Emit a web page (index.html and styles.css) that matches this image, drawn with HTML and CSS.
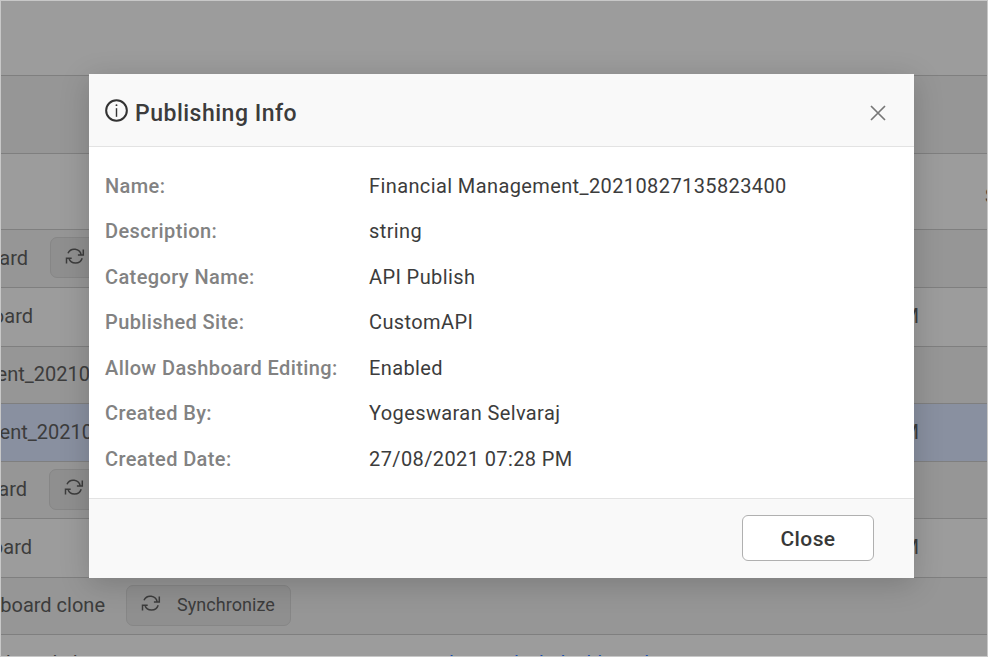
FILE: index.html
```
<!DOCTYPE html>
<html lang="en">
<head>
<meta charset="utf-8">
<title>Publishing Info</title>
<link rel="stylesheet" href="styles.css">
</head>
<body>
<svg class="defs" width="0" height="0">
  <symbol id="sync" viewBox="0 0 20 20">
    <path d="M3 7.3A7 7 0 0 1 16.2 9M18.3 3.6V8.9H12.9M17.2 12.3A7 7 0 0 1 3.9 12.2M1.5 17.5V12.2H6.7"/>
  </symbol>
</svg>
<main class="page">
  <div class="row h75"></div>
  <div class="row h78 alt"></div>
  <div class="row h76"><span class="status">Status</span></div>
  <div class="row h58 alt"><span class="name w27">ard</span><span class="sync first"><svg><use href="#sync"/></svg></span></div>
  <div class="row h59"><span class="name w32">oard</span><span class="time">PM</span></div>
  <div class="row h57 alt"><span class="name w89">ent_20210</span></div>
  <div class="row h58 selected"><span class="name w91">ent_20210</span><span class="time">PM</span></div>
  <div class="row h57 alt"><span class="name w27 shift">ard</span><span class="sync second"><svg><use href="#sync"/></svg></span></div>
  <div class="row h59"><span class="name w32 shift">oard</span><span class="time">PM</span></div>
  <div class="row h57 alt"><span class="name w104">board clone</span><span class="sync"><svg><use href="#sync"/></svg>Synchronize</span></div>
  <div class="row last"><span class="tail">board clone</span><span class="link"><span>l</span><span>l</span><span>k dashboard</span></span></div>
</main>
<section class="modal">
  <header class="head">
    <svg class="info" viewBox="0 0 24 24"><circle cx="12" cy="12" r="10.8"/><path class="stem" d="M12 9.6V18.6"/><circle class="dot" cx="12" cy="6.4" r="1"/></svg>
    <h1>Publishing Info</h1>
    <svg class="x" viewBox="0 0 16 16"><path d="M1 1L15 15M15 1L1 15"/></svg>
  </header>
  <dl class="body">
    <dt>Name:</dt><dd>Financial Management_20210827135823400</dd>
    <dt>Description:</dt><dd>string</dd>
    <dt>Category Name:</dt><dd>API Publish</dd>
    <dt>Published Site:</dt><dd>CustomAPI</dd>
    <dt>Allow Dashboard Editing:</dt><dd>Enabled</dd>
    <dt>Created By:</dt><dd>Yogeswaran Selvaraj</dd>
    <dt>Created Date:</dt><dd>27/08/2021 07:28 PM</dd>
  </dl>
  <footer class="foot"><button>Close</button></footer>
</section>
</body>
</html>
```
FILE: styles.css
```
* { box-sizing: border-box; }
body { margin: 0; font-family: Roboto, sans-serif; font-size: 20px; color: #3c3c3c; overflow: hidden; }
.defs { display: block; position: absolute; }
.page { width: 988px; height: 657px; border: 1px solid #c8c8c8; background: #9c9c9c; overflow: hidden; display: flex; flex-direction: column; }
.row { flex: none; display: flex; align-items: center; padding-bottom: 2px; border-bottom: 1px solid #7f7f7f; overflow: hidden; white-space: nowrap; }
.alt { background: #969696; }
.selected { background: #8990a0; }
.h57 { height: 57px; }
.h58 { height: 58px; }
.h59 { height: 59px; }
.h75 { height: 75px; }
.h76 { height: 76px; }
.h78 { height: 78px; }
.name { flex: none; display: flex; justify-content: flex-end; overflow: hidden; line-height: 26px; }
.w27 { width: 27px; }
.w32 { width: 32px; }
.w27.shift { width: 26px; }
.w32.shift { width: 31px; }
.w89 { width: 89px; }
.w91 { width: 92px; }
.w104 { width: 104px; }
.sync { flex: none; display: flex; align-items: center; width: 165px; height: 41px; margin-left: 21px; padding: 0 0 1px 14px; gap: 16px; border: 1px solid #868686; border-radius: 7px; background: #8f8f8f; font-size: 18px; letter-spacing: .05px; }
.sync.first, .sync.second { margin-left: 22px; }
.sync svg { width: 20px; height: 20px; margin-top: -3px; fill: none; stroke: #3c3c3c; stroke-width: 1.5; }
.time { margin-left: auto; margin-right: 68px; }
.status { margin-left: 984px; padding-top: 11px; font-weight: 500; }
.last { height: 22px; align-items: flex-start; border-bottom: 0; line-height: 24px; padding: 16px 0 0; }
.tail { width: 448px; padding-left: 5px; }
.link { display: flex; color: #174fb0; }
.link span:nth-child(1) { width: 65px; }
.link span:nth-child(2) { width: 25px; }

.modal { position: absolute; left: 89px; top: 74px; width: 825px; height: 504px; display: flex; flex-direction: column; background: #fff; box-shadow: 0 6px 28px rgba(0, 0, 0, .18); }
.head { flex: none; display: flex; align-items: center; height: 73px; padding: 0 28px 0 16px; background: #f9f9f9; border-bottom: 1px solid #e3e3e3; }
.info { width: 23px; height: 23px; margin-top: 1px; fill: none; stroke: #333; stroke-width: 2.1; }
.info .stem { stroke-width: 1.5; }
.info .dot { fill: #333; stroke: none; }
h1 { flex: 1; margin: 8px 0 0 7px; font-size: 23px; line-height: 30px; font-weight: 500; letter-spacing: .5px; }
.x { width: 16px; height: 16px; margin-top: 6px; fill: none; stroke: #777; stroke-width: 1.7; }
.body { flex: 1; margin: 0; padding: 16.7px 16px 0; display: grid; grid-template-columns: 264px 1fr; grid-auto-rows: 45.5px; line-height: 45.5px; letter-spacing: .39px; white-space: nowrap; }
dt { color: #828282; font-weight: 500; }
dd { margin: 0; }
.foot { flex: none; display: flex; justify-content: flex-end; align-items: flex-start; height: 80px; padding: 16px 40px 0; background: #f9f9f9; border-top: 1px solid #e3e3e3; }
button { width: 132px; height: 46px; padding: 2px 0 0; border: 1px solid #b0b0b0; border-radius: 6px; background: #fff; color: #383838; font: 500 21px Roboto, sans-serif; letter-spacing: .4px; }
```
